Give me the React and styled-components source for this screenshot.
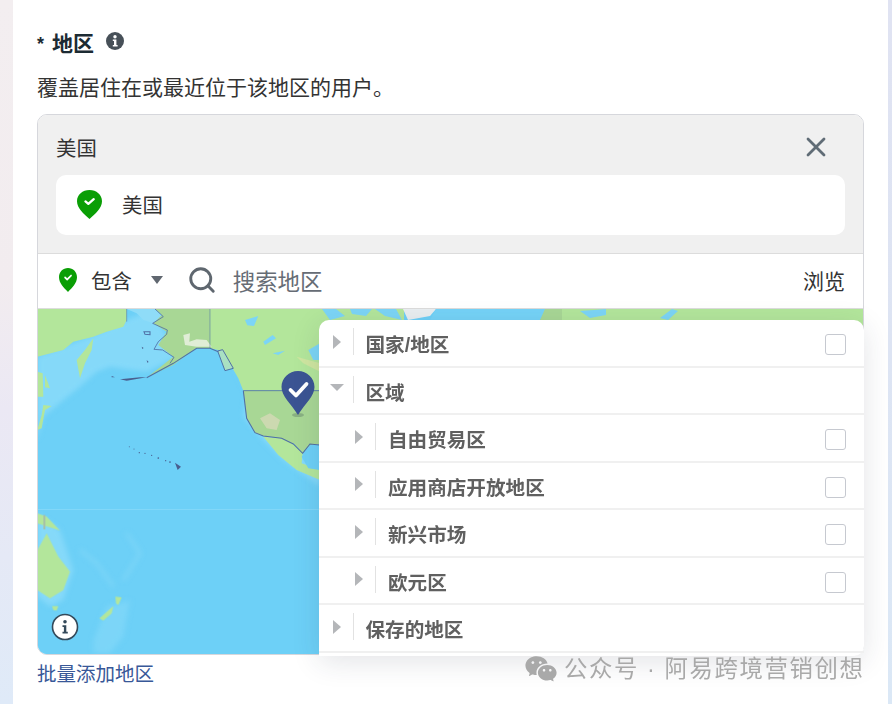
import React from "react";
import styled, { createGlobalStyle } from "styled-components";
import { X, Search } from "lucide-react";
import { RiWechatFill } from "react-icons/ri";

const Global = createGlobalStyle`
  html, body { margin: 0; padding: 0; }
  body {
    width: 892px; height: 704px; overflow: hidden;
    background:
      linear-gradient(180deg, #e0e3f2 0%, #dde4f3 50%, #dbe8f6 100%) right / 50% 100% no-repeat,
      linear-gradient(180deg, #f3eef0 0%, #f2ecef 40%, #ebe8f4 58%, #dfeaf8 100%) left / 50% 100% no-repeat;
    font-family: "Liberation Sans", "Noto Sans CJK SC", sans-serif;
  }
`;

const Page = styled.div`
  position: relative;
  margin-left: 13px;
  width: 875px;
  height: 704px;
  box-sizing: border-box;
  padding: 29px 24px 0 24px;
  background: #fff;
  overflow: hidden;
`;
const TitleRow = styled.div`
  display: flex;
  align-items: flex-start;
  height: 30px;
  color: #1c2b33;
  font-size: 21px;
  line-height: 30px;
  font-weight: 700;
`;
const Star = styled.span`
  font-size: 18px;
  width: 15px;
`;
const InfoBadge = styled.svg`
  width: 18px;
  height: 18px;
  margin: 3px 0 0 12px;
`;
const Description = styled.div`
  margin-top: 15px;
  height: 28px;
  font-size: 21px;
  line-height: 28px;
  color: #333;
`;
const Box = styled.div`
  position: relative;
  margin-top: 12px;
  width: 827px;
  height: 541px;
  box-sizing: border-box;
  border: 1px solid #d6d7dc;
  border-radius: 10px;
`;
const Selected = styled.div`
  height: 139px;
  box-sizing: border-box;
  padding: 0 18px;
  background: #f0f0f0;
  border-radius: 9px 9px 0 0;
  border-bottom: 1px solid #dcdcdc;
`;
const SelectedHead = styled.div`
  display: flex;
  align-items: center;
  justify-content: space-between;
  box-sizing: border-box;
  height: 60px;
  padding-top: 4px;
  font-size: 20.4px;
  color: #333;
`;
const CloseIcon = styled(X)`
  margin-right: 13px;
  color: #606c76;
`;
const SelectedCard = styled.div`
  display: flex;
  align-items: center;
  gap: 20px;
  box-sizing: border-box;
  height: 60px;
  padding: 0 0 1px 21px;
  background: #fff;
  border-radius: 10px;
  font-size: 20.4px;
  color: #333;
`;
const CardText = styled.span`
  margin-top: -1px;
`;
const Toolbar = styled.div`
  display: flex;
  align-items: center;
  box-sizing: border-box;
  height: 55px;
  padding: 0 18px 2px 21px;
  border-bottom: 1px solid #dcdcdc;
  background: #fff;
`;
const ToolText = styled.span`
  font-size: 20.4px;
  color: #333;
  margin-left: 14px;
`;
const Browse = styled.span`
  font-size: 21px;
  color: #333;
`;
const Caret = styled.span`
  width: 0;
  height: 0;
  margin-left: 19px;
  border-left: 6.5px solid transparent;
  border-right: 6.5px solid transparent;
  border-top: 8px solid #606770;
`;
const SearchIcon = styled(Search)`
  margin-left: 24px;
  color: #5f676f;
`;
const Placeholder = styled.span`
  margin-left: 16px;
  flex: 1;
  font-size: 22.4px;
  color: #666c75;
`;
const MapArea = styled.div`
  height: 345px;
  overflow: hidden;
  border-radius: 0 0 9px 9px;
  background: #6dd0f7;
`;
const MapSvg = styled.svg`
  display: block;
  width: 826px;
  height: 345px;
`;
const MapInfo = styled.svg`
  position: absolute;
  left: 13px;
  bottom: 13px;
  width: 28px;
  height: 28px;
`;
const Dropdown = styled.div`
  position: absolute;
  left: 281px;
  top: 205px;
  width: 545px;
  height: 336px;
  background: #fff;
  border-radius: 10px 10px 10px 0;
  box-shadow: 0 6px 28px rgba(40, 50, 70, 0.13);
`;
const Row = styled.div`
  display: flex;
  align-items: center;
  box-sizing: border-box;
  height: 47.5px;
  padding: 2px 18px 0 ${p => (p.$nested ? 36 : 13.5)}px;
  border-bottom: 2px solid #f0f0f0;
`;
const Tri = styled.span`
  flex: none;
  width: 0;
  height: 0;
  ${p =>
    p.$open
      ? `border-left: 7px solid transparent; border-right: 7px solid transparent; border-top: 7px solid #b4b6b9; margin: -8px 0 0 -3px;`
      : `border-top: 7px solid transparent; border-bottom: 7px solid transparent; border-left: 8px solid #b4b6b9; margin-top: -4px;`}
`;
const Divider = styled.span`
  flex: none;
  width: 1px;
  height: 27px;
  margin: -4px 12px 0 ${p => (p.$open ? 9 : 12)}px;
  background: #e2e2e2;
`;
const Label = styled.span`
  flex: 1;
  font-size: 19.6px;
  font-weight: 700;
  color: #606060;
`;
const Check = styled.span`
  box-sizing: border-box;
  width: 21px;
  height: 21px;
  margin-top: 2px;
  border: 1.5px solid #c6c9d0;
  border-radius: 3px;
  background: #fff;
`;
const BulkLink = styled.div`
  margin-top: 6px;
  font-size: 19.5px;
  line-height: 26px;
  color: #385898;
`;
const Watermark = styled.div`
  position: absolute;
  left: 511px;
  top: 652px;
  display: flex;
  align-items: center;
  gap: 6px;
  font-size: 23.4px;
  letter-spacing: 1.6px;
  line-height: 32px;
  white-space: nowrap;
  color: #a9a9a9;
`;

const Pin = ({ w = 25, h = 29 }) => (
  <svg width={w} height={h} viewBox="0 0 26 31" preserveAspectRatio="none">
    <path d="M13 0C5.800 0 0 5 0 12c0 7.400 7 13.600 13 19 6-5.400 13-11.600 13-19C26 5 20.200 0 13 0z" fill="#0a9e05" />
    <path d="M8.800 12.200l3 2.600 5.600-5" fill="none" stroke="#fff" strokeWidth="2.400" strokeLinecap="round" strokeLinejoin="round" />
  </svg>
);

const Z = ({ x = 30, y = 300, children }) => (
  <g transform={`translate(${x} ${y}) scale(0.3333)`}>{children}</g>
);

const LAND = "#b3e69b";
const TINT = "#a8d795";
const SHELF = "#85d9f9";
const LINE = "#4f6fa5";
const LAKE = "#7cd5f6";

const WorldMap = () => (
  <MapSvg viewBox="38 309 826 345">
    <defs>
      <filter id="soft"><feGaussianBlur stdDeviation="0.6" /></filter>
      <filter id="softer"><feGaussianBlur stdDeviation="2.500" /></filter>
    </defs>
    <rect x="38" y="309" width="826" height="345" fill="#6dd0f7" />
    <g filter="url(#softer)">
      <Z>
        <path d="M22 170L100 140L190 105L290 60L370 27L400 90L440 170L350 215L240 200L200 215L150 260L100 300L40 350L22 420z" fill={SHELF} />
        <path d="M600 190L650 280L640 350L700 420L760 480L870 560L870 500L720 410z" fill={SHELF} />
      </Z>
      <Z y={490}>
        <path d="M22 70L90 120L130 240L100 330L60 350L22 320z" fill={SHELF} />
        <path d="M190 450L230 350L300 330L280 440L240 490L190 490z" fill="#7bd5f8" />
        <path d="M150 180L200 220L250 290M290 130L330 190L280 270" fill="none" stroke="#7ed6f8" strokeWidth="9" />
      </Z>
    </g>
    <g filter="url(#soft)">
      <Z>
        <path d="M22 27L290 27L290 60L280 80L230 95L190 110L130 125L100 150L22 170z" fill={LAND} />
        <path d="M190 115L165 150L140 180L150 235L165 190L185 150z" fill={LAND} />
        <path d="M22 215L38 220L40 290L22 290zM45 225L60 265L45 262zM40 315L65 318L45 330L35 385L22 390L35 345z" fill={LAND} />
        <path d="M375 27L540 27L540 145L500 145L470 165L430 195L365 225L350 233L430 170L385 135L410 95L370 70L395 45z" fill={TINT} />
        <path d="M290 27L375 27L395 45L370 70L340 60L320 40z" fill="#8fdcf8" />
        <path d="M540 27L890 27L890 272L640 272L625 235L605 200L565 150L540 145z" fill={LAND} />
        <path d="M563 153L578 149L610 205L585 212z" fill="#a9e0c2" stroke={LINE} strokeWidth="3" />
        <path d="M835 150L870 130L870 180L850 180zM645 60L685 48L672 78L652 76zM700 125L728 105L738 115L705 135zM728 160L765 152L745 165z" fill={LAKE} />
        <path d="M800 170L870 190L870 215L820 190z" fill="#cfe6a0" />
        <path d="M640 272L890 272L890 432L840 435L818 460L790 430L770 430L755 415L700 408L675 398L650 355z" fill={TINT} />
        <path d="M690 355L720 340L750 360L740 390L710 385z" fill="#d4d9b6" opacity="0.8" />
        <path d="M700 410L755 415L790 432L818 460L815 490L870 510L870 540L800 510L745 465z" fill={LAND} />
        <path d="M815 470L845 435L870 440L870 510L835 505z" fill="#6dd0f7" />
        <path d="M460 105L480 100L478 125L500 118L530 120L545 140L500 140L465 135z" fill="#eef2e6" opacity="0.8" />
        <g fill="none" stroke={LINE} strokeWidth="3.200">
          <path d="M350 233L430 190L500 145L540 145L565 155" />
          <path d="M375 27L400 50L368 70L412 90L410 103L385 125L372 148L398 150L432 172L420 190" strokeWidth="2.500" />
          <path d="M342 95L360 95L360 104L345 103z" />
          <path d="M540 27L540 145M290 27L290 65" strokeWidth="2" opacity="0.8" />
          <path d="M640 272L868 272" strokeWidth="2.500" />
          <path d="M640 272L650 355L675 398L700 408L755 415L790 432L818 460L840 432L868 435" />
        </g>
        <g fill="#4a5f8f">
          <path d="M245 228l10 4-10 0zM270 238l60 -6 20 0 -60 10zM335 140l6 4-4 3zM350 180l6 6-4 2zM435 488l18 12-10 10z" />
          <circle cx="298" cy="440" r="1.500" /><circle cx="312" cy="447" r="1.500" /><circle cx="328" cy="458" r="2" /><circle cx="345" cy="460" r="2" /><circle cx="365" cy="466" r="2" /><circle cx="385" cy="474" r="2.500" /><circle cx="407" cy="482" r="2" /><circle cx="420" cy="486" r="2.500" />
        </g>
      </Z>
      <Z y={490}>
        <path d="M22 70L50 80L90 122L60 112L22 100z" fill={LAND} />
        <path d="M22 180L50 130L85 200L120 245L100 300L60 325L22 300z" fill={LAND} />
        <path d="M66 348L85 348L80 362L70 360zM208 385L250 348L245 370L220 392zM256 320L275 322L265 345L258 340z" fill={LAND} />
        <path d="M40 75L46 75L46 118L40 118z" fill="#a6c0a8" />
      </Z>
      <path d="M300 309L404 309L404 335L300 335z" fill={LAND} />
      <path d="M322 309L336 309L345 316L330 320zM350 309L372 309L366 316L352 314zM375 309L396 309L402 320L385 316z" fill={LAKE} />
      <path d="M403 309L436 309L430 316L408 320z" fill="#e9eef0" />
      <path d="M436 309L548 309L540 320L430 320z" fill="#74d3f7" />
      <path d="M545 309L870 309L870 340L540 340z" fill={LAND} />
      <path d="M580 311L594 310L606 309L606 315L590 318zM660 318L672 309L678 311L668 320z" fill={LAKE} />
      <path d="M545 309L562 309L562 320L540 320z" fill={TINT} />
    </g>
    <rect x="38" y="509" width="300" height="1" fill="#8fdcf9" opacity="0.6" />
    <ellipse cx="298" cy="415" rx="6" ry="2" fill="#6a8a70" opacity="0.5" />
    <path d="M298 371c-9 0-16.500 7-16.500 16 0 9 9 16 16.500 28 7.500-12 16.500-19 16.500-28 0-9-7.500-16-16.500-16z" fill="#3b5493" />
    <path d="M290.500 390l5.500 5.500 10.500-11.500" fill="none" stroke="#fff" strokeWidth="3.800" strokeLinecap="round" strokeLinejoin="round" />
  </MapSvg>
);

const rows = [
  { t: "国家/地区", check: true },
  { t: "区域", open: true },
  { t: "自由贸易区", nested: true, check: true },
  { t: "应用商店开放地区", nested: true, check: true },
  { t: "新兴市场", nested: true, check: true },
  { t: "欧元区", nested: true, check: true },
  { t: "保存的地区" },
];

export default function App() {
  return (
    <>
      <Global />
      <Page>
        <TitleRow>
          <Star>*</Star>
          <span>地区</span>
          <InfoBadge viewBox="0 0 18 18">
            <circle cx="9" cy="9" r="9" fill="#475058" />
            <circle cx="9" cy="4.800" r="1.700" fill="#fff" />
            <path d="M6.800 7.400h3.600v5.600h1.200v1.600H6.800V13H8V9H6.800z" fill="#fff" />
          </InfoBadge>
        </TitleRow>
        <Description>覆盖居住在或最近位于该地区的用户。</Description>
        <Box>
          <Selected>
            <SelectedHead>
              <span>美国</span>
              <CloseIcon size={32} strokeWidth={2.100} />
            </SelectedHead>
            <SelectedCard>
              <Pin />
              <CardText>美国</CardText>
            </SelectedCard>
          </Selected>
          <Toolbar>
            <Pin w={18} h={24} />
            <ToolText>包含</ToolText>
            <Caret />
            <SearchIcon size={30} strokeWidth={2.300} />
            <Placeholder>搜索地区</Placeholder>
            <Browse>浏览</Browse>
          </Toolbar>
          <MapArea>
            <WorldMap />
          </MapArea>
          <MapInfo viewBox="0 0 28 28">
            <circle cx="14" cy="14" r="12.500" fill="#fff" stroke="#34495a" strokeWidth="1.600" />
            <circle cx="14" cy="8.800" r="1.800" fill="#34495a" />
            <path d="M11.500 12.200h3.800v6.600h1.500v1.700h-5.300v-1.700h1.400v-4.900h-1.400z" fill="#34495a" />
          </MapInfo>
          <Dropdown>
            {rows.map(r => (
              <Row key={r.t} $nested={r.nested}>
                <Tri $open={r.open} />
                <Divider $open={r.open} />
                <Label>{r.t}</Label>
                {r.check && <Check />}
              </Row>
            ))}
          </Dropdown>
        </Box>
        <BulkLink>批量添加地区</BulkLink>
        <Watermark>
          <RiWechatFill size={34} />
          <span>公众号 · 阿易跨境营销创想</span>
        </Watermark>
      </Page>
    </>
  );
}
